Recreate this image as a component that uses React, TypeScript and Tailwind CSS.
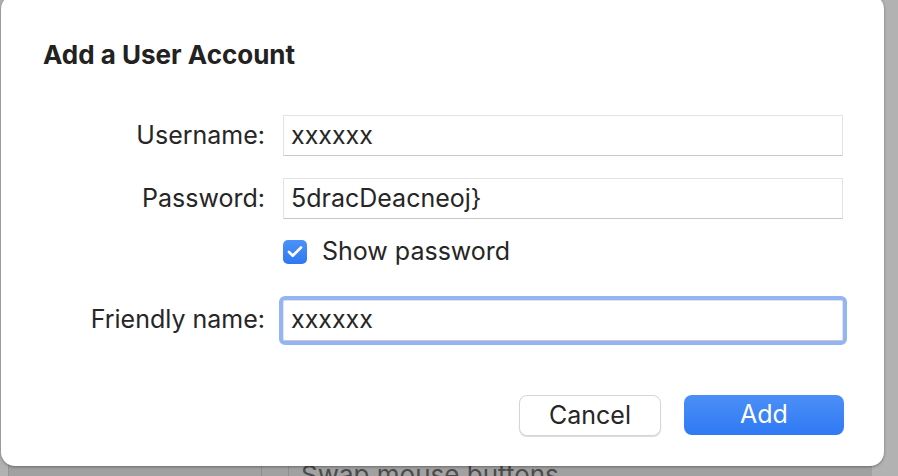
import { Check } from "lucide-react";

const font = { fontFamily: "Inter, 'Noto Sans', sans-serif" };

function Field({ value, focused }: { value: string; focused?: boolean }) {
  return (
    <div
      className={
        "h-[41px] w-[560px] bg-white flex items-center px-[7px] text-[25px] text-[#262626] border border-[#e3e3e3] border-b-[#c8c8c8] " +
        (focused ? "outline-[4px] outline-solid outline-[#93b4f5] rounded-[2px]" : "")
      }
    >
      {value}
    </div>
  );
}

function Label({ children }: { children: string }) {
  return <div className="w-[264px] text-right text-[25px] text-[#262626]">{children}</div>;
}

export default function App() {
  return (
    <div className="relative w-[898px] h-[476px] overflow-hidden bg-[#b2b2b2]" style={font}>
      {/* window behind the sheet */}
      <div className="absolute left-[8px] top-[300px] w-[864px] h-[200px] bg-[#a1a1a1] border-l border-[#959595]">
        <div className="absolute left-[252px] top-0 h-full w-px bg-[#8f8f8f]" />
        <div className="absolute left-[279px] top-0 h-full w-px bg-[#8f8f8f]" />
        <div className="absolute left-[292px] top-[155px] text-[26px] text-[#4b4b4b]">Swap mouse buttons</div>
      </div>

      {/* sheet */}
      <div className="absolute left-[1px] top-[-5px] w-[883px] h-[471px] rounded-[14px] bg-white shadow-[0_1px_3px_rgba(0,0,0,0.35)] flex flex-col">
        <div className="pl-[42px] pt-[45px] text-[26px] leading-[30px] font-bold text-[#222]">Add a User Account</div>

        <div className="mt-[45px] flex items-center gap-[18px]">
          <Label>Username:</Label>
          <Field value="xxxxxx" />
        </div>
        <div className="mt-[22px] flex items-center gap-[18px]">
          <Label>Password:</Label>
          <Field value="5dracDeacneoj}" />
        </div>
        <div className="mt-[14px] flex items-center gap-[15px] pl-[282px]">
          <div className="w-[24px] h-[24px] rounded-[5px] bg-gradient-to-b from-[#4b92f8] to-[#2f78f2] flex items-center justify-center">
            <Check className="w-[18px] h-[18px] text-white" strokeWidth={3.5} />
          </div>
          <span className="text-[25px] text-[#262626]">Show password</span>
        </div>
        <div className="mt-[29px] flex items-center gap-[18px]">
          <Label>Friendly name:</Label>
          <Field value="xxxxxx" focused />
        </div>

        <div className="mt-auto mb-[30px] flex justify-end gap-[23px] pr-[40px]">
          <button className="w-[142px] h-[41px] rounded-[8px] bg-white border border-[#d6d6d6] shadow-[0_1px_1px_rgba(0,0,0,0.15)] text-[25px] text-[#262626]">
            Cancel
          </button>
          <button className="w-[160px] h-[40px] rounded-[8px] bg-gradient-to-b from-[#4b8ff7] to-[#2f79f4] text-[25px] text-white">
            Add
          </button>
        </div>
      </div>
    </div>
  );
}
